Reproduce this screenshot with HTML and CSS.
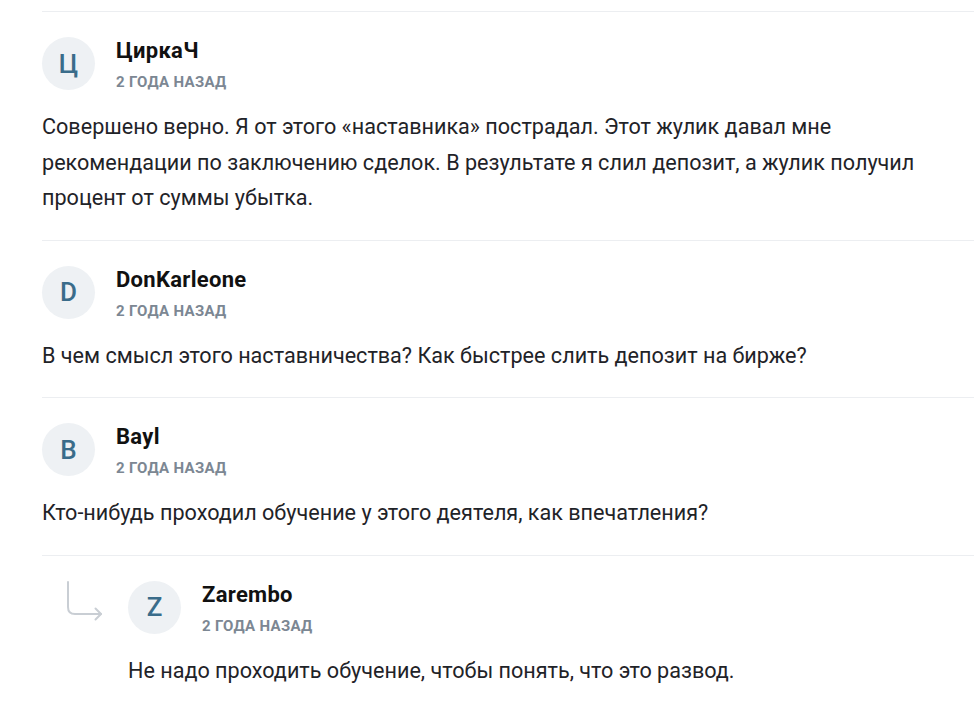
FILE: index.html
```html
<!DOCTYPE html>
<html lang="ru">
<head>
    <meta charset="UTF-8">
    <meta name="viewport" content="width=device-width, initial-scale=1.0">
    <title>Комментарии</title>
    <link rel="stylesheet" href="styles.css">
</head>
<body>
    <div class="comments">
        <div class="comment">
            <div class="comment-head">
                <div class="avatar">Ц</div>
                <div class="meta">
                    <div class="author">ЦиркаЧ</div>
                    <div class="date">2 года назад</div>
                </div>
            </div>
            <p class="comment-text">Совершено верно. Я от этого «наставника» пострадал. Этот жулик давал мне рекомендации по заключению сделок. В результате я слил депозит, а жулик получил процент от суммы убытка.</p>
        </div>

        <div class="comment">
            <div class="comment-head">
                <div class="avatar">D</div>
                <div class="meta">
                    <div class="author">DonKarleone</div>
                    <div class="date">2 года назад</div>
                </div>
            </div>
            <p class="comment-text">В чем смысл этого наставничества? Как быстрее слить депозит на бирже?</p>
        </div>

        <div class="comment">
            <div class="comment-head">
                <div class="avatar">B</div>
                <div class="meta">
                    <div class="author">Bayl</div>
                    <div class="date">2 года назад</div>
                </div>
            </div>
            <p class="comment-text">Кто-нибудь проходил обучение у этого деятеля, как впечатления?</p>
        </div>

        <div class="comment comment-reply">
            <svg class="reply-arrow" width="38" height="36" viewBox="0 0 38 36" fill="none">
                <path d="M2 1 V26 Q2 33 9 33 H35" stroke="#c9ced4" stroke-width="2" stroke-linecap="round"/>
                <path d="M29.5 27.5 L35 33 L29.5 38.5" stroke="#c9ced4" stroke-width="2" stroke-linecap="round" stroke-linejoin="round"/>
            </svg>
            <div class="reply-body">
                <div class="comment-head">
                    <div class="avatar">Z</div>
                    <div class="meta">
                        <div class="author">Zarembo</div>
                        <div class="date">2 года назад</div>
                    </div>
                </div>
                <p class="comment-text">Не надо проходить обучение, чтобы понять, что это развод.</p>
            </div>
        </div>
    </div>
</body>
</html>
```

FILE: styles.css
```css
* {
    margin: 0;
    padding: 0;
    box-sizing: border-box;
}

body {
    background: #fff;
    font-family: Roboto, 'Liberation Sans', sans-serif;
    color: #1f2328;
    overflow: hidden;
}

.comments {
    margin-left: 42px;
    padding-top: 11px;
}

.comment {
    border-top: 1px solid #eceef1;
    padding: 25px 0 24px;
}

.comment-head {
    display: flex;
    align-items: flex-start;
    gap: 21px;
}

.avatar {
    width: 53px;
    height: 53px;
    border-radius: 50%;
    background-color: #eef1f4;
    color: #3a6c8a;
    font-size: 26px;
    font-weight: 500;
    display: flex;
    justify-content: center;
    align-items: center;
    flex-shrink: 0;
}

.meta {
    padding-top: 1px;
}

.author {
    font-size: 22px;
    font-weight: bold;
    line-height: 26px;
    letter-spacing: 0.3px;
    color: #111;
}

.date {
    margin-top: 9px;
    font-size: 15px;
    font-weight: bold;
    line-height: 18px;
    letter-spacing: 0.3px;
    text-transform: uppercase;
    color: #7c8793;
}

.comment-text {
    margin-top: 18px;
    font-size: 21.6px;
    line-height: 35.5px;
}

.comment-reply {
    display: flex;
    align-items: flex-start;
    padding-left: 24px;
}

.reply-arrow {
    flex-shrink: 0;
    margin-right: 24px;
    overflow: visible;
}
```
